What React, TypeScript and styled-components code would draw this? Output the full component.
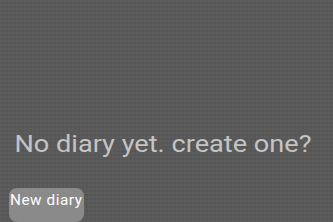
import React from "react";
import styled, { createGlobalStyle } from "styled-components";

const Global = createGlobalStyle`
  html, body { margin: 0; padding: 0; background: #595959; }
  body { font-family: Roboto, "Liberation Sans", sans-serif; }
`;

const Page = styled.div`
  width: 333px;
  height: 222px;
  overflow: hidden;
  box-sizing: border-box;
  padding-top: 131px;
  display: flex;
  flex-direction: column;
  background-color: #595959;
  background-image:
    radial-gradient(circle at 1px 1px, rgba(255,255,255,0.035) 0.6px, transparent 0.9px),
    radial-gradient(circle at 3px 3px, rgba(0,0,0,0.05) 0.6px, transparent 0.9px);
  background-size: 4px 4px, 4px 4px;
`;

const Message = styled.div`
  font-size: 23px;
  line-height: 27px;
  color: #c4c4c4;
  text-align: center;
  padding-right: 6px;
  white-space: nowrap;
  transform: scaleX(1.18);
  transform-origin: 50% 50%;
`;

const NewButton = styled.button`
  align-self: flex-start;
  margin: 30px 0 0 9px;
  width: 75px;
  height: 50px;
  padding: 3px 0 0 1px;
  border: none;
  border-radius: 8px;
  background: #8a8a8a;
  color: #ffffff;
  font-family: Roboto, "Liberation Sans", sans-serif;
  font-size: 15.3px;
  letter-spacing: 0.55px;
  line-height: 18px;
  text-align: left;
  display: flex;
  align-items: flex-start;
  white-space: nowrap;
`;

export default function App() {
  return (
    <>
      <Global />
      <Page>
        <Message>No diary yet. create one?</Message>
        <NewButton>New diary</NewButton>
      </Page>
    </>
  );
}
